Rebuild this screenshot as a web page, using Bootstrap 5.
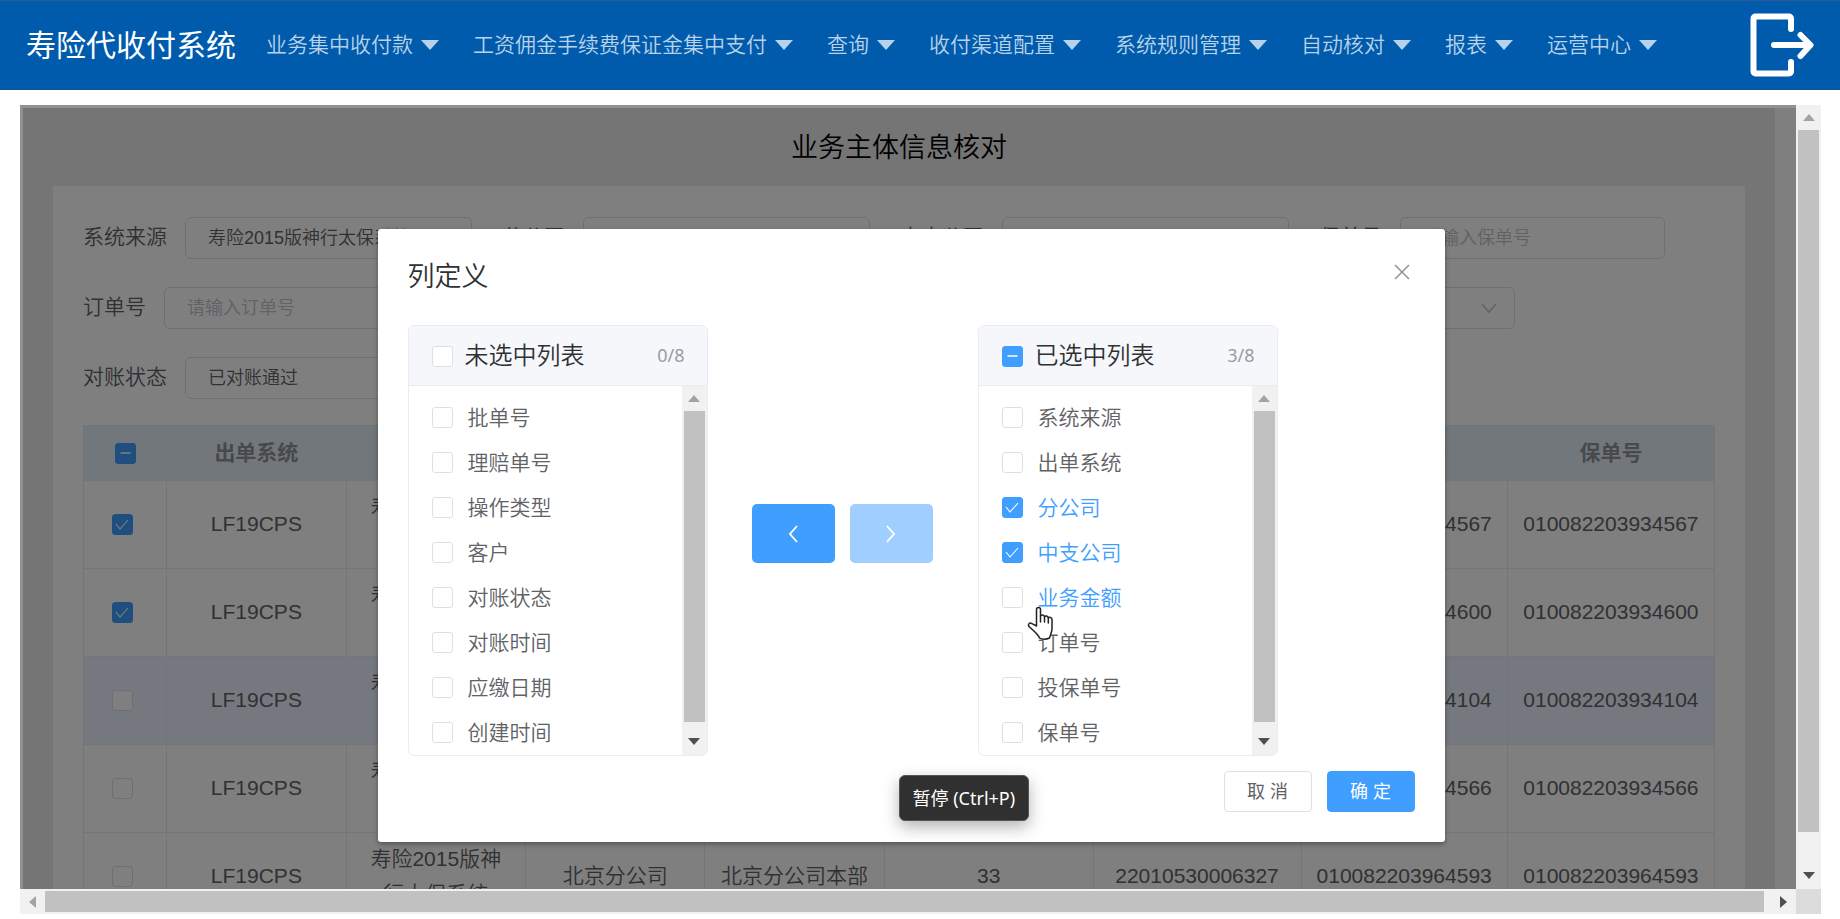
<!DOCTYPE html>
<html lang="zh-CN">
<head>
<meta charset="utf-8">
<meta name="viewport" content="width=device-width, initial-scale=1">
<title>寿险代收付系统</title>
<link href="https://cdn.jsdelivr.net/npm/bootstrap@5.3.0/dist/css/bootstrap.min.css" rel="stylesheet">
<style>
  body { font-family: "Liberation Sans", "Noto Sans CJK SC", sans-serif; font-size: 21px; font-weight: 350; line-height: 35px; color: #606266; }

  /* top navigation */
  .topbar { height: 90px; background: #005bac; border-top: 1px solid #2b5c90; border-bottom: 1px solid #0d4f9c; padding: 0 26px; }
  .topbar .brand { font-size: 30px; font-weight: 400; color: #fff; margin-right: 30px; }
  .topbar .nav { padding-bottom: 2px; }
  .topbar .nav-link { color: #b8d2ea; padding: 0; margin-right: 34px; white-space: nowrap; }
  .topbar .nav-link::after { content: ""; display: inline-block; margin-left: 8px; vertical-align: 2px; border: 0 solid transparent; border-width: 10px 9px 0; border-top-color: #b8d2ea; }

  /* framed page with scroll bars */
  .frame { margin: 15px 19px 5px 20px; min-height: 0; }
  .view { border: 0 solid #919191; border-width: 3px 0 0 3px; }
  .sheet { padding-right: 21px; background: #fff; }
  .sheet-body { background: #eaeaea; padding: 0 30px; }
  .sheet-title { font-size: 27px; line-height: 36px; color: #000; margin: 0; padding: 22px 0 20px; font-weight: 350; }
  .panel { background: #fff; padding: 31px 30px; }
  .field-row { height: 42px; margin-bottom: 28px; gap: 30px; }
  .field-row .row-tail { margin-left: auto; margin-right: 200px; }
  .field { display: flex; align-items: center; gap: 18px; }
  .field label { white-space: nowrap; padding-bottom: 4px; }
  .box { width: 265px; height: 42px; border: 1px solid #dcdfe6; border-radius: 6px; background-color: #fff; padding: 0 22px; font-size: 18px; font-weight: 350; color: #606266; line-height: 40px; }
  .box::placeholder { color: #c0c4cc; opacity: 1; }
  select.box { width: 287px; appearance: none; background-image: url("data:image/svg+xml,%3Csvg xmlns='http://www.w3.org/2000/svg' width='18' height='12'%3E%3Cpath d='M2 2l7 8 7-8' fill='none' stroke='%23c0c4cc' stroke-width='1.5'/%3E%3C/svg%3E"); background-repeat: no-repeat; background-position: right 16px center; }

  .grid { width: 100%; table-layout: fixed; border-collapse: collapse; text-align: center; line-height: 35px; margin-top: -2px; }
  .grid th, .grid td { border: 1px solid #e6eaf3; padding: 0 14px 2px; }
  .grid th { height: 55px; background: #e4eff6; color: #909399; font-weight: 700; }
  .grid td { height: 88px; }
  .grid .num { white-space: nowrap; padding: 0 0 2px; }
  .grid tr.hovered td { background: #ebf3ff; }
  .grid td:first-child { padding-right: 20px; }
  .grid .tick.form-check-input { vertical-align: -4px; }

  .tick.form-check-input { width: 21px; height: 21px; margin: 0; flex: none; float: none; border: 1px solid #dcdfe6; border-radius: 3px; background-size: 21px 21px; vertical-align: middle; }
  .tick.form-check-input:checked { background-color: #409eff; border-color: #409eff; background-image: url("data:image/svg+xml,%3Csvg xmlns='http://www.w3.org/2000/svg' viewBox='0 0 21 21'%3E%3Cpath d='M4 10l4 5 8-9' fill='none' stroke='%23fff' stroke-width='1.1'/%3E%3C/svg%3E"); }
  .tick.form-check-input:indeterminate { background-color: #409eff; border-color: #409eff; background-image: url("data:image/svg+xml,%3Csvg xmlns='http://www.w3.org/2000/svg' viewBox='0 0 21 21'%3E%3Cpath d='M5.500 10h10' stroke='%23fff' stroke-width='1.4'/%3E%3C/svg%3E"); }

  /* dialog */
  .mask { background: rgba(0, 0, 0, .5); padding: 121px 0 0 3px; }
  .dialog { position: relative; width: 1067px; background: #fff; border-radius: 3px; padding: 30px; box-shadow: 0 2px 5px rgba(0, 0, 0, .35); }
  .dialog h2 { font-size: 27px; font-weight: 350; line-height: 36px; color: #303133; margin: 0; }
  .close-btn { border: 0; background: none; padding: 5px; line-height: 0; }
  .transfer { margin-top: 30px; }
  .pick { width: 300px; height: 431px; border: 1px solid #e8edf5; border-radius: 6px; overflow: hidden; display: flex; flex-direction: column; }
  .pick-head { height: 60px; flex: none; background: #f5f7fb; border-bottom: 1px solid #e8edf5; padding: 2px 22px 0 23px; gap: 12px; }
  .pick-head label { font-size: 24px; color: #303133; line-height: 36px; padding-bottom: 1px; }
  .pick-head .tally { font-family: "Noto Sans", sans-serif; font-size: 18px; font-weight: 400; color: #999ca3; padding-bottom: 2px; }
  .pick-body { flex: 1; min-height: 0; }
  .pick-list { list-style: none; margin: 0; padding: 9px 0 0 23px; flex: 1; }
  .pick-list li { display: flex; align-items: center; gap: 15px; height: 45px; }
  .pick-list .on, .pick-list input:checked + label { color: #409eff; }
  .movers { gap: 15px; padding: 0 45px 14px 44px; }
  .movers button { width: 83px; height: 59px; border: 0; border-radius: 5px; background: #409eff; line-height: 0; }
  .movers button:disabled { background: #a0cfff; }
  .foot { gap: 15px; margin-top: 15px; }
  .foot button { width: 88px; height: 41px; border: 1px solid #dcdfe6; border-radius: 4px; background: #fff; color: #606266; font-size: 18px; line-height: 38px; padding: 0; }
  .foot .ok { background: #409eff; border-color: #409eff; color: #fff; font-weight: 400; }

  /* scroll bars */
  .vbar, .hbar { background: #f1f1f1; display: flex; align-items: center; }
  .vbar { width: 25px; flex: none; flex-direction: column; }
  .hbar { height: 25px; }
  .vbar i { flex: 1; width: 21px; background: #c1c1c1; }
  .hbar i { flex: 1; height: 21px; background: #c1c1c1; }
  .corner { width: 25px; background: #dcdcdc; }
  .arr { flex: none; display: grid; place-items: center; width: 25px; height: 25px; }
  .arr.low { height: 33px; padding-top: 6px; }
  .arr.wide { width: 32px; padding-left: 7px; }
  .vbar .tall { height: 57px; padding-top: 30px; }
  .arr svg { display: block; }

  .hint { position: absolute; left: 521px; top: 546px; padding: 0 13px; height: 46px; border: 1px solid #555; border-radius: 6px; background: #303030; color: #fff; font: 400 18px/44px "Noto Sans", "Noto Sans CJK SC", sans-serif; white-space: nowrap; box-shadow: 0 6px 16px rgba(0, 0, 0, .3); }
  .hand { position: absolute; left: 649px; top: 377px; }
</style>
</head>
<body class="vh-100 d-flex flex-column overflow-hidden bg-white">

<header class="topbar d-flex align-items-center flex-shrink-0">
  <span class="brand">寿险代收付系统</span>
  <nav class="nav flex-nowrap flex-grow-1" aria-label="主导航">
    <a class="nav-link" href="#">业务集中收付款</a>
    <a class="nav-link" href="#">工资佣金手续费保证金集中支付</a>
    <a class="nav-link" href="#">查询</a>
    <a class="nav-link" href="#">收付渠道配置</a>
    <a class="nav-link" href="#">系统规则管理</a>
    <a class="nav-link" href="#">自动核对</a>
    <a class="nav-link" href="#">报表</a>
    <a class="nav-link" href="#">运营中心</a>
  </nav>
  <a href="#" class="lh-1" aria-label="退出">
    <svg class="d-block" width="64" height="64" viewBox="0 0 64 64" fill="none" stroke="#fff" stroke-width="6" stroke-linecap="round" stroke-linejoin="round">
      <path d="M41 16V5.500a2 2 0 0 0-2-2H5.500a2 2 0 0 0-2 2v53a2 2 0 0 0 2 2H39a2 2 0 0 0 2-2V49"/>
      <path d="M24 32h35M50.500 22L60.500 32l-10 11"/>
    </svg>
  </a>
</header>

<main class="frame flex-grow-1 d-flex flex-column">
  <div class="d-flex flex-grow-1" style="min-height:0">
    <div class="view position-relative overflow-hidden flex-grow-1">
      <div class="sheet">
        <div class="sheet-body">
          <h1 class="sheet-title text-center">业务主体信息核对</h1>
          <form class="panel">
            <div class="field-row d-flex">
              <div class="field"><label for="src">系统来源</label><select class="box" id="src"><option>寿险2015版神行太保系统</option></select></div>
              <div class="field"><label for="branch">分公司</label><select class="box" id="branch"><option></option></select></div>
              <div class="field"><label for="sub">中支公司</label><select class="box" id="sub"><option></option></select></div>
              <div class="field"><label for="policy">保单号</label><input class="box" id="policy" placeholder="请输入保单号"></div>
            </div>
            <div class="field-row d-flex">
              <div class="field"><label for="order">订单号</label><input class="box" id="order" placeholder="请输入订单号"></div>
              <div class="field row-tail"><select class="box" aria-label="操作类型"><option></option></select></div>
            </div>
            <div class="field-row d-flex">
              <div class="field"><label for="state">对账状态</label><select class="box" id="state"><option>已对账通过</option></select></div>
            </div>
            <table class="grid">
              <colgroup><col style="width:5.100%"><col style="width:11%"><col style="width:11%"><col style="width:11%"><col style="width:11%"><col style="width:12.800%"><col style="width:12.750%"><col style="width:12.650%"><col style="width:12.700%"></colgroup>
              <thead>
                <tr><th><input class="form-check-input tick" type="checkbox" data-partial aria-label="全选"></th><th>出单系统</th><th>系统来源</th><th>分公司</th><th>中支公司</th><th>业务金额</th><th>订单号</th><th>投保单号</th><th>保单号</th></tr>
              </thead>
              <tbody>
                <tr><td><input class="form-check-input tick" type="checkbox" checked aria-label="选择"></td><td>LF19CPS</td><td>寿险2015版神行太保系统</td><td>北京分公司</td><td class="num">北京分公司本部</td><td>33</td><td class="num">22010530006327</td><td class="num">010082203934567</td><td class="num">010082203934567</td></tr>
                <tr><td><input class="form-check-input tick" type="checkbox" checked aria-label="选择"></td><td>LF19CPS</td><td>寿险2015版神行太保系统</td><td>北京分公司</td><td class="num">北京分公司本部</td><td>33</td><td class="num">22010530006327</td><td class="num">010082203934600</td><td class="num">010082203934600</td></tr>
                <tr class="hovered"><td><input class="form-check-input tick" type="checkbox" aria-label="选择"></td><td>LF19CPS</td><td>寿险2015版神行太保系统</td><td>北京分公司</td><td class="num">北京分公司本部</td><td>33</td><td class="num">22010530006327</td><td class="num">010082203934104</td><td class="num">010082203934104</td></tr>
                <tr><td><input class="form-check-input tick" type="checkbox" aria-label="选择"></td><td>LF19CPS</td><td>寿险2015版神行太保系统</td><td>北京分公司</td><td class="num">北京分公司本部</td><td>33</td><td class="num">22010530006327</td><td class="num">010082203934566</td><td class="num">010082203934566</td></tr>
                <tr><td><input class="form-check-input tick" type="checkbox" aria-label="选择"></td><td>LF19CPS</td><td>寿险2015版神行太保系统</td><td>北京分公司</td><td class="num">北京分公司本部</td><td>33</td><td class="num">22010530006327</td><td class="num">010082203964593</td><td class="num">010082203964593</td></tr>
              </tbody>
            </table>
          </form>
        </div>
      </div>

      <div class="mask position-absolute top-0 start-0 w-100 h-100 d-flex justify-content-center align-items-start">
        <section class="dialog" role="dialog" aria-labelledby="dlg">
          <div class="d-flex justify-content-between align-items-start">
            <h2 id="dlg">列定义</h2>
            <button class="close-btn" type="button" aria-label="关闭"><svg width="16" height="16" viewBox="0 0 16 16" stroke="#909399" stroke-width="1.500"><path d="M1 1l14 14M15 1L1 15"/></svg></button>
          </div>
          <div class="transfer d-flex align-items-center">
            <div class="pick">
              <div class="pick-head d-flex align-items-center"><input class="form-check-input tick" type="checkbox" id="allL"><label for="allL">未选中列表</label><span class="tally ms-auto">0/8</span></div>
              <div class="pick-body d-flex">
                <ul class="pick-list">
                  <li><input class="form-check-input tick" type="checkbox" id="l1"><label for="l1">批单号</label></li>
                  <li><input class="form-check-input tick" type="checkbox" id="l2"><label for="l2">理赔单号</label></li>
                  <li><input class="form-check-input tick" type="checkbox" id="l3"><label for="l3">操作类型</label></li>
                  <li><input class="form-check-input tick" type="checkbox" id="l4"><label for="l4">客户</label></li>
                  <li><input class="form-check-input tick" type="checkbox" id="l5"><label for="l5">对账状态</label></li>
                  <li><input class="form-check-input tick" type="checkbox" id="l6"><label for="l6">对账时间</label></li>
                  <li><input class="form-check-input tick" type="checkbox" id="l7"><label for="l7">应缴日期</label></li>
                  <li><input class="form-check-input tick" type="checkbox" id="l8"><label for="l8">创建时间</label></li>
                </ul>
                <div class="vbar"><span class="arr"><svg width="12" height="7"><path d="M0 7l6-7 6 7z" fill="#a3a3a3"/></svg></span><i></i><span class="arr low"><svg width="12" height="7"><path d="M0 0h12l-6 7z" fill="#505050"/></svg></span></div>
              </div>
            </div>
            <div class="movers d-flex">
              <button type="button" aria-label="移到左侧"><svg width="10" height="18" viewBox="0 0 10 18" fill="none" stroke="#fff" stroke-width="1.800"><path d="M9 1L2 9l7 8"/></svg></button>
              <button type="button" aria-label="移到右侧" disabled><svg width="10" height="18" viewBox="0 0 10 18" fill="none" stroke="#fff" stroke-width="1.800"><path d="M1 1l7 8-7 8"/></svg></button>
            </div>
            <div class="pick">
              <div class="pick-head d-flex align-items-center"><input class="form-check-input tick" type="checkbox" id="allR" data-partial><label for="allR">已选中列表</label><span class="tally ms-auto">3/8</span></div>
              <div class="pick-body d-flex">
                <ul class="pick-list">
                  <li><input class="form-check-input tick" type="checkbox" id="r1"><label for="r1">系统来源</label></li>
                  <li><input class="form-check-input tick" type="checkbox" id="r2"><label for="r2">出单系统</label></li>
                  <li><input class="form-check-input tick" type="checkbox" id="r3" checked><label for="r3">分公司</label></li>
                  <li><input class="form-check-input tick" type="checkbox" id="r4" checked><label for="r4">中支公司</label></li>
                  <li><input class="form-check-input tick" type="checkbox" id="r5"><label for="r5" class="on">业务金额</label></li>
                  <li><input class="form-check-input tick" type="checkbox" id="r6"><label for="r6">订单号</label></li>
                  <li><input class="form-check-input tick" type="checkbox" id="r7"><label for="r7">投保单号</label></li>
                  <li><input class="form-check-input tick" type="checkbox" id="r8"><label for="r8">保单号</label></li>
                </ul>
                <div class="vbar"><span class="arr"><svg width="12" height="7"><path d="M0 7l6-7 6 7z" fill="#a3a3a3"/></svg></span><i></i><span class="arr low"><svg width="12" height="7"><path d="M0 0h12l-6 7z" fill="#505050"/></svg></span></div>
              </div>
            </div>
          </div>
          <div class="foot d-flex justify-content-end">
            <button type="button">取 消</button>
            <button type="button" class="ok">确 定</button>
          </div>
          <div class="hint" role="tooltip">暂停 (Ctrl+P)</div>
          <svg class="hand" width="27" height="34" viewBox="0 0 27 34" fill="#fff" stroke="#222" stroke-width="1.500" stroke-linejoin="round" stroke-linecap="round">
            <path d="M9.500 20V3.500a2 2 0 0 1 4 0V10c.5-1.500 3.500-1.500 4 .8.700-1.300 3.400-1 3.800 1 .8-1 3.700-.6 3.700 1.700V23c0 2-1 4-1.500 6l-1 3c-3 1.500-8 1.500-10 0-.5-2-2.500-3.500-4-5.500L2 20.500c-1.500-2.500 1-4.500 3-2.800z"/>
            <path d="M13.500 10v6M17.500 11v5M21.300 12v5" fill="none"/>
          </svg>
        </section>
      </div>
    </div>
    <div class="vbar"><span class="arr"><svg width="12" height="7"><path d="M0 7l6-7 6 7z" fill="#a3a3a3"/></svg></span><i></i><span class="arr tall"><svg width="12" height="7"><path d="M0 0h12l-6 7z" fill="#505050"/></svg></span></div>
  </div>
  <div class="d-flex">
    <div class="hbar flex-grow-1"><span class="arr"><svg width="7" height="12"><path d="M7 0v12L0 6z" fill="#a3a3a3"/></svg></span><i></i><span class="arr wide"><svg width="7" height="12"><path d="M0 0v12l7-6z" fill="#505050"/></svg></span></div>
    <div class="corner"></div>
  </div>
</main>

<script src="https://cdn.jsdelivr.net/npm/bootstrap@5.3.0/dist/js/bootstrap.bundle.min.js"></script>
<script>
  document.querySelectorAll('[data-partial]').forEach(function (box) { box.indeterminate = true; });
</script>
</body>
</html>
